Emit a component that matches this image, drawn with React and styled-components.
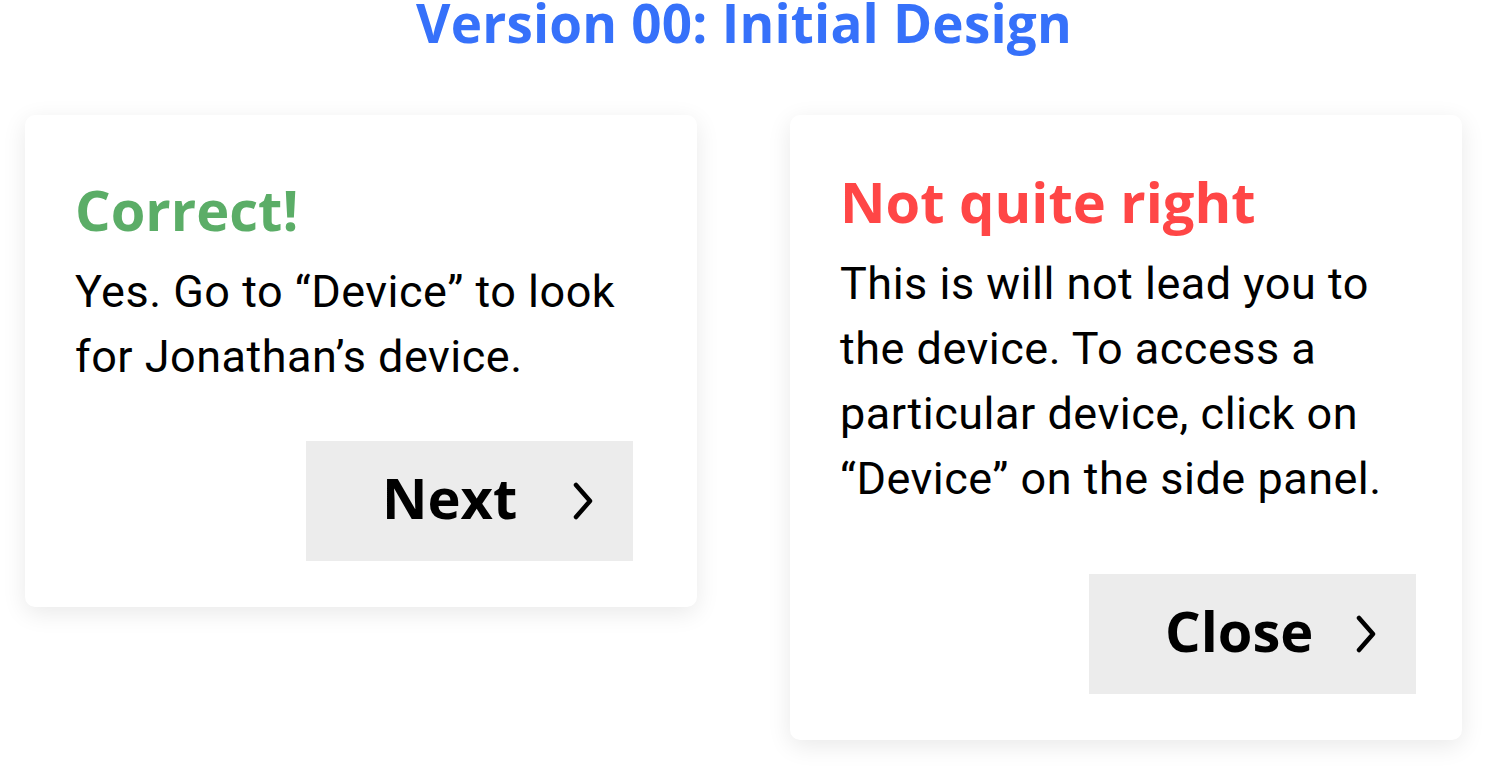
import styled, { createGlobalStyle } from "styled-components";

const GlobalStyle = createGlobalStyle`
  html, body {
    margin: 0;
    padding: 0;
    background: #ffffff;
  }
  body {
    font-family: "Roboto", "Liberation Sans", sans-serif;
    -webkit-font-smoothing: antialiased;
  }
`;

const Chevron = () => (
  <svg width="20" height="38" viewBox="0 0 20 38" fill="none">
    <path
      d="M3 3 L17 19 L3 35"
      stroke="#000"
      strokeWidth="4.5"
      strokeLinecap="round"
      strokeLinejoin="round"
    />
  </svg>
);

const FeedbackCard = ({ title, tone, top, height, inset, label, children }) => (
  <Card $top={top} $height={height}>
    <Heading $tone={tone}>{title}</Heading>
    <Body>{children}</Body>
    <ActionButton $inset={inset}>
      <span>{label}</span>
      <Chevron />
    </ActionButton>
  </Card>
);

export default function App() {
  return (
    <>
      <GlobalStyle />
      <Page>
        <Title>Version 00: Initial Design</Title>
        <CardRow>
          <FeedbackCard
            title="Correct!"
            tone="#5bad67"
            top={62}
            height={492}
            inset={64}
            label="Next"
          >
            Yes. Go to “Device” to look for Jonathan’s device.
          </FeedbackCard>
          <FeedbackCard
            title="Not quite right"
            tone="#ff4646"
            top={54}
            height={625}
            inset={46}
            label="Close"
          >
            This is will not lead you to the device. To access a particular
            device, click on “Device” on the side panel.
          </FeedbackCard>
        </CardRow>
      </Page>
    </>
  );
}

const Page = styled.div`
  display: flex;
  flex-direction: column;
  align-items: center;
  width: 1488px;
  height: 774px;
  overflow: hidden;
`;

const Title = styled.h1`
  margin: 0;
  font-family: "Open Sans", "Liberation Sans", sans-serif;
  font-weight: 700;
  font-size: 53px;
  line-height: 46px;
  color: #3671fa;
  letter-spacing: 0.2px;
`;

const CardRow = styled.div`
  display: flex;
  align-items: flex-start;
  justify-content: space-between;
  width: 100%;
  box-sizing: border-box;
  margin-top: 69px;
  padding: 0 26px 0 25px;
`;

const Card = styled.section`
  display: flex;
  flex-direction: column;
  width: 672px;
  height: ${(p) => p.$height}px;
  box-sizing: border-box;
  padding: ${(p) => p.$top}px 50px 46px 50px;
  background: #ffffff;
  border-radius: 10px;
  box-shadow: 0 6px 24px rgba(0, 0, 0, 0.09);
`;

const Heading = styled.h2`
  margin: 0;
  font-family: "Open Sans", "Liberation Sans", sans-serif;
  font-weight: 700;
  font-size: 56px;
  line-height: 64px;
  color: ${(p) => p.$tone};
`;

const Body = styled.p`
  margin: 18px 0 0 0;
  font-family: "Roboto", "Liberation Sans", sans-serif;
  font-weight: 400;
  font-size: 45px;
  line-height: 65px;
  letter-spacing: 0.5px;
  color: #000;
`;

const ActionButton = styled.button`
  display: flex;
  align-items: center;
  justify-content: space-between;
  align-self: flex-end;
  width: 327px;
  height: 120px;
  box-sizing: border-box;
  margin-top: auto;
  margin-right: ${(p) => p.$inset - 50}px;
  padding: 0 40px 0 76px;
  border: none;
  border-radius: 0;
  background: #ececec;
  font-family: "Open Sans", "Liberation Sans", sans-serif;
  font-weight: 700;
  font-size: 56px;
  color: #000;
  cursor: pointer;

  span {
    line-height: 1;
    margin-bottom: 8px;
  }
`;
